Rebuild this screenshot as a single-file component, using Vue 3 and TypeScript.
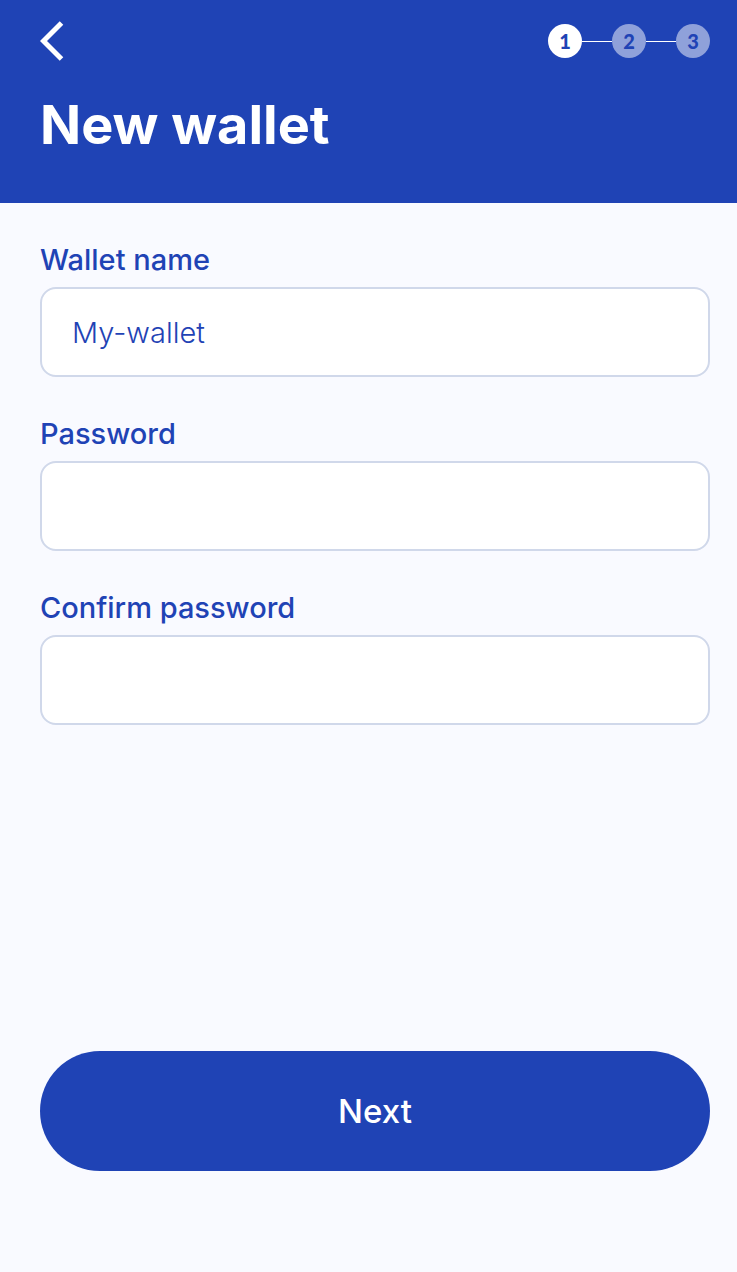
<script setup lang="ts">
import { reactive, ref } from 'vue'

interface Field {
  id: 'name' | 'password' | 'confirm'
  label: string
  type: 'text' | 'password'
}

const fields: Field[] = [
  { id: 'name', label: 'Wallet name', type: 'text' },
  { id: 'password', label: 'Password', type: 'password' },
  { id: 'confirm', label: 'Confirm password', type: 'password' },
]

const form = reactive({ name: 'My-wallet', password: '', confirm: '' })
const steps = [1, 2, 3]
const currentStep = ref(1)
</script>

<template>
  <div class="page">
    <header class="header">
      <div class="bar">
        <button class="back" type="button" aria-label="Back">
          <svg width="24" height="40" viewBox="0 0 24 40" fill="none" aria-hidden="true">
            <path d="M21.5 2 3.5 20l18 18" stroke="currentColor" stroke-width="5" />
          </svg>
        </button>
        <ol class="steps">
          <li
            v-for="step in steps"
            :key="step"
            class="step"
            :aria-current="step === currentStep ? 'step' : undefined"
          >
            <span class="dot" :class="{ active: step === currentStep }">{{ step }}</span>
          </li>
        </ol>
      </div>
      <h1 class="title">New wallet</h1>
    </header>

    <form class="form" @submit.prevent>
      <div v-for="field in fields" :key="field.id" class="field">
        <label class="label" :for="field.id">{{ field.label }}</label>
        <input
          :id="field.id"
          v-model="form[field.id]"
          class="input"
          :type="field.type"
          autocomplete="off"
          spellcheck="false"
        />
      </div>
      <button class="next" type="submit">Next</button>
    </form>
  </div>
</template>

<style>
body {
  background: #f9faff;
}
</style>

<style scoped>
.page {
  display: flex;
  flex-direction: column;
  min-height: 100vh;
  background: #f9faff;
  color: #1f43b5;
  font-family: Inter, "Open Sans", sans-serif;
}

.header {
  padding: 21px 27px 46px 40px;
  background: #1f43b5;
  color: #fff;
}

.bar {
  display: flex;
  align-items: center;
  justify-content: space-between;
}

.back {
  display: flex;
  padding: 0;
  border: 0;
  background: none;
  color: inherit;
  cursor: pointer;
}

.steps {
  display: flex;
  margin: 0;
  padding: 0;
  list-style: none;
}

.step {
  display: flex;
  align-items: center;
}

.step + .step::before {
  content: "";
  width: 30px;
  height: 1px;
  background: #fff;
}

.dot {
  width: 34px;
  border-radius: 50%;
  background: #8fa1da;
  color: #1f43b5;
  font-family: Lato, sans-serif;
  font-size: 20px;
  font-weight: 900;
  line-height: 34px;
  text-align: center;
}

.dot.active {
  background: #fff;
}

.title {
  margin: 32px 0 0;
  font-size: 54px;
  font-weight: 700;
  line-height: 64px;
}

.form {
  display: flex;
  flex: 1;
  flex-direction: column;
  gap: 40px;
  padding: 40px 27px 101px 40px;
}

.field {
  display: flex;
  flex-direction: column;
  gap: 10px;
}

.label {
  font-size: 29px;
  font-weight: 500;
  line-height: 34px;
}

.input {
  box-sizing: border-box;
  width: 100%;
  height: 90px;
  padding: 0 30px;
  border: 2px solid #d0d8ea;
  border-radius: 16px;
  outline: 0;
  background: #fff;
  color: #1f43b5;
  font: 300 29px/34px Inter, "Open Sans", sans-serif;
}

.next {
  height: 120px;
  margin-top: auto;
  border: 0;
  border-radius: 60px;
  background: #1f43b5;
  color: #fff;
  font: 500 33px/40px Inter, "Open Sans", sans-serif;
  cursor: pointer;
}
</style>
